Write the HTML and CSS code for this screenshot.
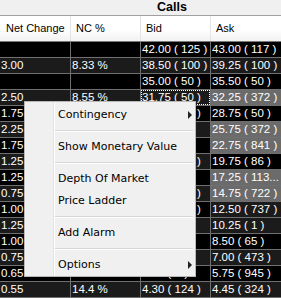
FILE: index.html
```html
<!DOCTYPE html>
<html>
<head>
<meta charset="utf-8">
<link rel="stylesheet" href="styles.css">
</head>
<body>
<div class="title">Calls</div>
<div class="head">
  <div class="h first">Net Change</div>
  <div class="h">NC %</div>
  <div class="h">Bid</div>
  <div class="h">Ask</div>
</div>
<div class="rows">
  <div class="row odd"><div></div><div></div><div>42.00 ( 125 )</div><div>43.00 ( 117 )</div></div>
  <div class="row even"><div>3.00</div><div>8.33 %</div><div>38.50 ( 100 )</div><div>39.25 ( 100 )</div></div>
  <div class="row odd"><div></div><div></div><div>35.00 ( 50 )</div><div>35.50 ( 50 )</div></div>
  <div class="row even"><div>2.50</div><div>8.55 %</div><div class="focus">31.75 ( 50 )</div><div class="gray">32.25 ( 372 )</div></div>
  <div class="row odd"><div>1.75</div><div></div><div>28.25 ( 50 )</div><div class="black">28.75 ( 50 )</div></div>
  <div class="row even"><div>2.25</div><div></div><div>25.25 ( 7 )</div><div class="gray">25.75 ( 372 )</div></div>
  <div class="row odd"><div>1.75</div><div></div><div>22.00 ( 6 )</div><div class="gray">22.75 ( 841 )</div></div>
  <div class="row even"><div>1.25</div><div></div><div>19.25 ( 50 )</div><div class="black">19.75 ( 86 )</div></div>
  <div class="row odd"><div>1.25</div><div></div><div>16.75 ( 8 )</div><div class="gray">17.25 ( 113...</div></div>
  <div class="row even"><div>0.75</div><div></div><div>14.25 ( 50 )</div><div class="gray">14.75 ( 722 )</div></div>
  <div class="row odd"><div>1.00</div><div></div><div>12.00 ( 40 )</div><div class="dark">12.50 ( 737 )</div></div>
  <div class="row even"><div>1.25</div><div></div><div>9.75 ( 12 )</div><div class="dark">10.25 ( 1 )</div></div>
  <div class="row odd"><div>1.00</div><div></div><div>8.25 ( 5 )</div><div class="black">8.50 ( 65 )</div></div>
  <div class="row even"><div>0.75</div><div></div><div>6.75 ( 8 )</div><div class="dark">7.00 ( 473 )</div></div>
  <div class="row odd"><div>0.65</div><div></div><div>5.50 ( 9 )</div><div class="black">5.75 ( 945 )</div></div>
  <div class="row even"><div>0.55</div><div>14.4 %</div><div>4.30 ( 124 )</div><div>4.45 ( 324 )</div></div>
</div>
<div class="menu">
  <div class="item sub">Contingency</div>
  <div class="sep"></div>
  <div class="item">Show Monetary Value</div>
  <div class="sep"></div>
  <div class="item">Depth Of Market</div>
  <div class="item">Price Ladder</div>
  <div class="sep"></div>
  <div class="item">Add Alarm</div>
  <div class="sep"></div>
  <div class="item sub">Options</div>
</div>
</body>
</html>
```

FILE: styles.css
```css
html, body {
  margin: 0;
  padding: 0;
}
body {
  width: 281px;
  height: 298px;
  overflow: hidden;
  position: relative;
  background: #f0f0f0;
  font-family: "Liberation Sans", Arial, sans-serif;
}
.title {
  height: 15px;
  line-height: 14px;
  border-bottom: 1px solid #a0a0a0;
  padding-left: 157px;
  font-weight: bold;
  font-size: 12.5px;
  color: #000;
}
.head {
  display: grid;
  grid-template-columns: 70px 69px 69px 70px;
  column-gap: 1px;
  background: #e4e4e4;
  border-bottom: 1px solid #7a7a7a;
}
.h {
  height: 25px;
  line-height: 25px;
  padding-left: 5px;
  font-size: 11px;
  color: #000;
  background: linear-gradient(#ffffff, #ffffff 55%, #f1f1f1);
}
.h.first {
  padding-left: 6px;
}
.rows {
  background: #6f6f6f;
}
.row {
  display: grid;
  grid-template-columns: 70px 69px 69px 70px;
  column-gap: 1px;
  border-bottom: 1px solid #6f6f6f;
}
.row > div {
  height: 15px;
  line-height: 15px;
  padding-left: 1px;
  font-size: 11.5px;
  color: #fff;
  white-space: nowrap;
  overflow: hidden;
}
.row.odd > div {
  background: #000;
}
.row.even > div {
  background: #1b1b1b;
}
.row > div.gray {
  background: #6b6b6b;
}
.row > div.black {
  background: #000;
}
.row > div.dark {
  background: #1b1b1b;
}
.row > div.focus {
  outline: 1px dotted #ffffff;
  outline-offset: -1px;
}
.menu {
  position: absolute;
  left: 24px;
  top: 101px;
  width: 166px;
  padding: 2px 2px 0 2px;
  border: 1px solid #b8b8b8;
  background: linear-gradient(to right, #f0f0f0 0 28px, #e2e3e3 28px 29px, #ffffff 29px 30px, #f0f0f0 30px);
  font-family: "DejaVu Sans", Verdana, sans-serif;
  font-size: 11px;
  color: #000;
}
.item {
  position: relative;
  height: 22px;
  line-height: 22px;
  padding-left: 31px;
}
.item.sub::after {
  content: "";
  position: absolute;
  right: 1px;
  top: 7px;
  border-left: 4px solid #222;
  border-top: 4px solid transparent;
  border-bottom: 4px solid transparent;
}
.sep {
  height: 0;
  margin: 4px 0 4px 28px;
  border-top: 1px solid #d7d7d7;
  border-bottom: 1px solid #ffffff;
}
```
